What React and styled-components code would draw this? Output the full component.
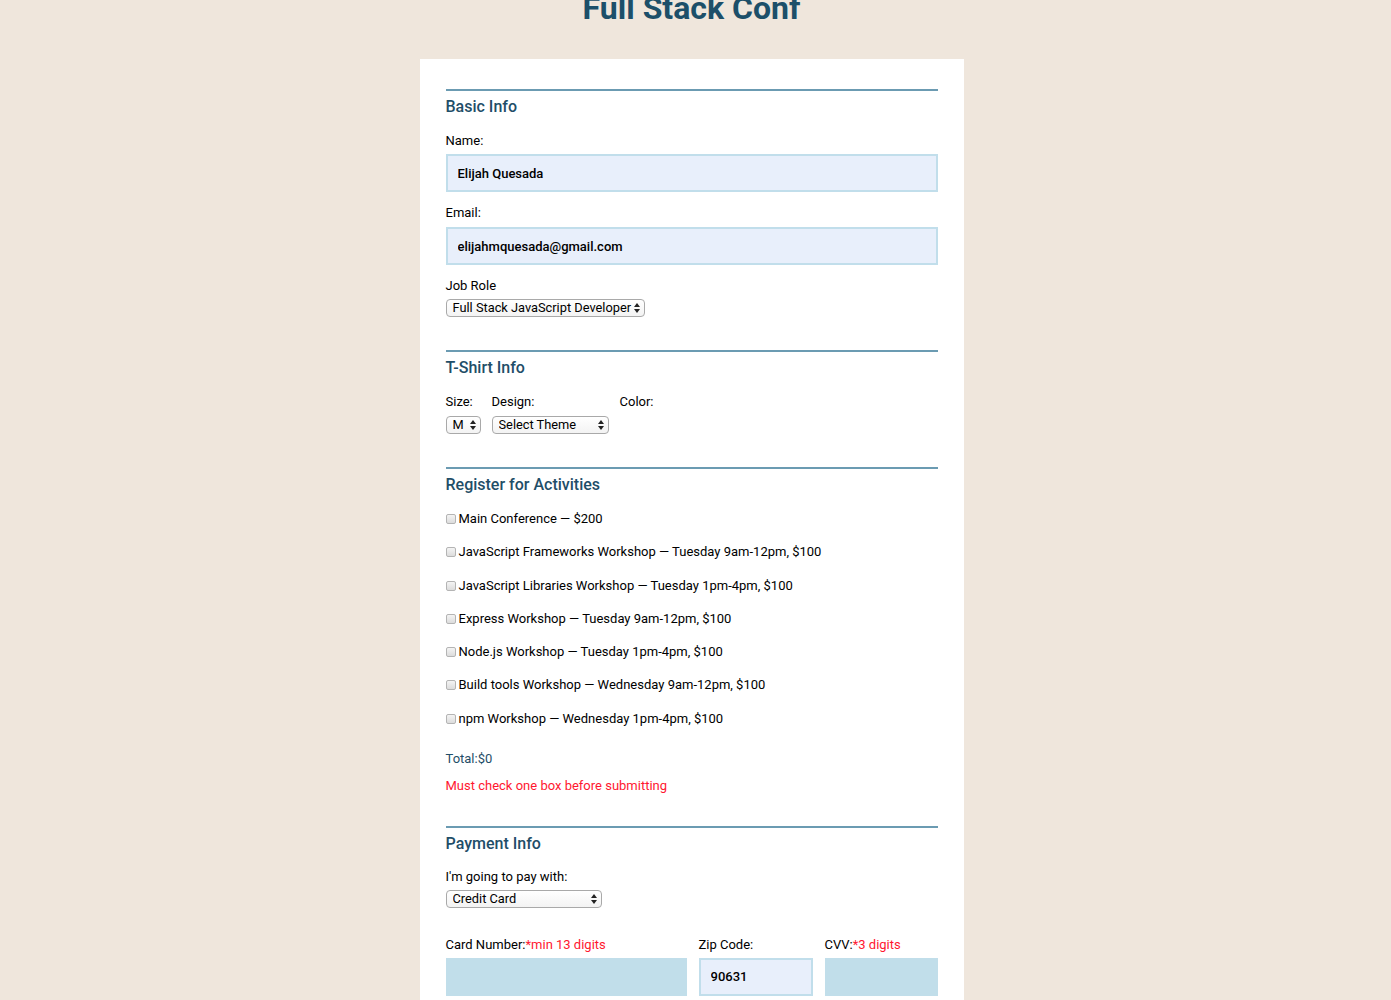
import React from "react";
import styled, { createGlobalStyle } from "styled-components";

const GlobalStyle = createGlobalStyle`
  html, body { margin: 0; padding: 0; }
  body {
    background: #efe6dc;
    font-family: Roboto, "Liberation Sans", Arial, sans-serif;
    color: #000;
  }
`;

const Page = styled.div`
  display: flex;
  flex-direction: column;
  align-items: center;
  padding-right: 8px;
`;

const Header = styled.header`
  height: 59px;
  width: 100%;
  display: flex;
  justify-content: center;
  overflow: hidden;
`;

const Title = styled.h1`
  margin: -8px 0 0;
  font-size: 32px;
  line-height: 32px;
  font-weight: 700;
  color: #1c4f69;
`;

const Form = styled.form`
  width: 544px;
  box-sizing: border-box;
  background: #fff;
  padding: 30px 26px 20px;
  min-height: 960px;
`;

const Section = styled.fieldset`
  border: none;
  border-top: 2px solid #6b9bb2;
  margin: 0 0 ${(p) => p.$gap || 33}px;
  padding: 0;
  min-width: 0;
  display: flex;
  flex-direction: column;
  align-items: flex-start;
`;

const Heading = styled.h2`
  margin: 6px 0 0;
  font-size: 16px;
  line-height: 20px;
  font-weight: 500;
  color: #1f4e68;
`;

const Label = styled.label`
  display: block;
  font-size: 13px;
  line-height: 16px;
  padding-top: 1px;
  margin-top: ${(p) => (p.$top != null ? p.$top : 12)}px;
`;

const Hint = styled.span`
  color: #ff1730;
`;

const TextInput = styled.input`
  box-sizing: border-box;
  width: 100%;
  height: 38px;
  margin-top: ${(p) => (p.$top != null ? p.$top : 5)}px;
  padding: 0 10px;
  border: 2px solid #c1deeb;
  background: ${(p) => (p.$empty ? "#c1deea" : "#e8effb")};
  border-color: ${(p) => (p.$empty ? "#c1deea" : "#c1deeb")};
  font-family: Roboto, "Liberation Sans", Arial, sans-serif;
  font-size: 13px;
  font-weight: 500;
  color: #000;
  outline: none;
`;

const SelectWrap = styled.div`
  position: relative;
  display: block;
  margin-top: ${(p) => (p.$top != null ? p.$top : 5)}px;
  width: ${(p) => p.$w}px;
  height: 18px;
`;

const Select = styled.select`
  appearance: none;
  -webkit-appearance: none;
  display: block;
  box-sizing: border-box;
  width: 100%;
  height: 18px;
  margin: 0;
  padding: 0 0 0 6px;
  border: 1px solid #a9a9a9;
  border-radius: 4px;
  background: linear-gradient(#ffffff, #f3f3f3);
  font-family: Roboto, "Liberation Sans", Arial, sans-serif;
  font-size: 12.8px;
  line-height: 16px;
  color: #000;
  outline: none;
`;

const Arrows = styled.svg`
  position: absolute;
  right: 5px;
  top: 4px;
  pointer-events: none;
`;

const SelectBox = ({ w, top, value }) => (
  <SelectWrap $w={w} $top={top}>
    <Select defaultValue={value}>
      <option>{value}</option>
    </Select>
    <Arrows width="6" height="10" viewBox="0 0 6 10">
      <path d="M3 0 L6 4 L0 4 Z" fill="#222" />
      <path d="M0 6 L6 6 L3 10 Z" fill="#222" />
    </Arrows>
  </SelectWrap>
);

const Row = styled.div`
  display: flex;
  gap: 11px;
  margin-top: 15px;
`;

const Column = styled.div`
  display: flex;
  flex-direction: column;
  align-items: flex-start;
  min-width: ${(p) => p.$w || 0}px;
`;

const Activity = styled.label`
  display: flex;
  align-items: center;
  font-size: 13px;
  line-height: 16px;
  margin-top: ${(p) => p.$top}px;
`;

const Check = styled.input.attrs({ type: "checkbox" })`
  appearance: none;
  -webkit-appearance: none;
  box-sizing: border-box;
  width: 10px;
  height: 10px;
  margin: 0 3px 0 0;
  border: 1px solid #b4b4b4;
  border-radius: 2px;
  background: linear-gradient(#f4f4f4, #dcdcdc);
`;

const Total = styled.p`
  margin: 24px 0 0;
  font-size: 13px;
  line-height: 16px;
  color: #1f4e68;
`;

const ErrorText = styled.p`
  margin: 11px 0 0;
  font-size: 13px;
  line-height: 16px;
  color: #ff1730;
`;

const CardGrid = styled.div`
  display: grid;
  grid-template-columns: 241px 114px 1fr;
  column-gap: 12px;
  width: 100%;
  margin-top: 28px;
`;

const activities = [
  "Main Conference — $200",
  "JavaScript Frameworks Workshop — Tuesday 9am-12pm, $100",
  "JavaScript Libraries Workshop — Tuesday 1pm-4pm, $100",
  "Express Workshop — Tuesday 9am-12pm, $100",
  "Node.js Workshop — Tuesday 1pm-4pm, $100",
  "Build tools Workshop — Wednesday 9am-12pm, $100",
  "npm Workshop — Wednesday 1pm-4pm, $100",
];

export default function App() {
  return (
    <>
      <GlobalStyle />
      <Page>
        <Header>
          <Title>Full Stack Conf</Title>
        </Header>
        <Form onSubmit={(e) => e.preventDefault()}>
          <Section>
            <Heading>Basic Info</Heading>
            <Label $top={15}>Name:</Label>
            <TextInput defaultValue="Elijah Quesada" />
            <Label>Email:</Label>
            <TextInput defaultValue="elijahmquesada@gmail.com" $top={6} />
            <Label>Job Role</Label>
            <SelectBox w={199} value="Full Stack JavaScript Developer" />
          </Section>

          <Section>
            <Heading>T-Shirt Info</Heading>
            <Row>
              <Column $w={35}>
                <Label $top={0}>Size:</Label>
                <SelectBox w={35} top={6} value="M" />
              </Column>
              <Column $w={117}>
                <Label $top={0}>Design:</Label>
                <SelectBox w={117} top={6} value="Select Theme" />
              </Column>
              <Column>
                <Label $top={0}>Color:</Label>
              </Column>
            </Row>
          </Section>

          <Section $gap={32}>
            <Heading>Register for Activities</Heading>
            {activities.map((a, i) => (
              <Activity key={a} $top={i === 0 ? 16 : 17.3}>
                <Check />
                {a}
              </Activity>
            ))}
            <Total>Total:$0</Total>
            <ErrorText>Must check one box before submitting</ErrorText>
          </Section>

          <Section>
            <Heading>Payment Info</Heading>
            <Label $top={14}>I'm going to pay with:</Label>
            <SelectBox w={156} value="Credit Card" />
            <CardGrid>
              <Column>
                <Label $top={0}>
                  Card Number:<Hint>*min 13 digits</Hint>
                </Label>
                <TextInput $empty />
              </Column>
              <Column>
                <Label $top={0}>Zip Code:</Label>
                <TextInput defaultValue="90631" />
              </Column>
              <Column>
                <Label $top={0}>
                  CVV:<Hint>*3 digits</Hint>
                </Label>
                <TextInput $empty />
              </Column>
            </CardGrid>
          </Section>
        </Form>
      </Page>
    </>
  );
}
